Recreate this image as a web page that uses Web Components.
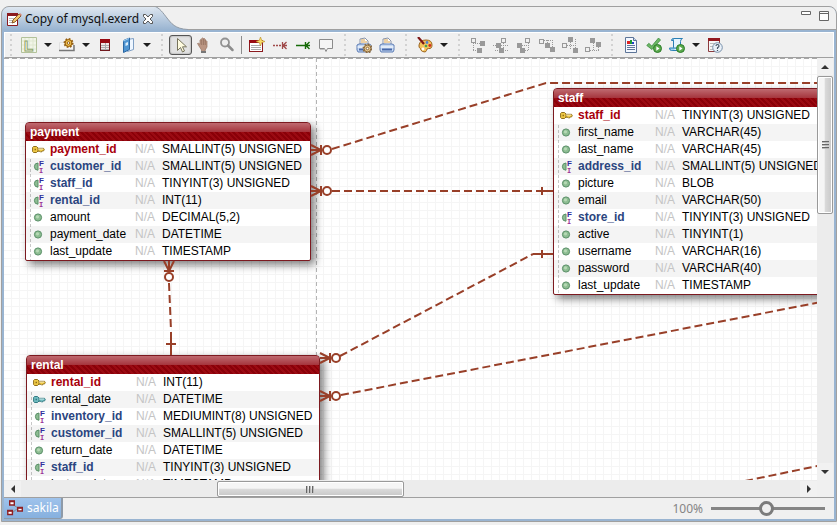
<!DOCTYPE html>
<html lang="en">
<head>
<meta charset="utf-8">
<title>Copy of mysql.exerd</title>
<style>
html, body { height: 100%; }
body { margin: 0; background: #f0f0f0; font: 12px/16px "Noto Sans", "Open Sans", sans-serif; color: #111; overflow: hidden; }
</style>
</head>
<body>
<exerd-editor></exerd-editor>
<script>
const svg = (w, h, body) => `<svg width="${w}" height="${h}" viewBox="0 0 ${w} ${h}" aria-hidden="true">${body}</svg>`;
const boxes = (outline, solid, dots) => svg(16, 16,
  `<g fill="none" stroke="#999" shape-rendering="crispEdges"><path d="M${outline[0]}.5 ${outline[1]}.5h4v4h-4z"/><path stroke-dasharray="1 1" d="${dots}"/></g>` +
  `<g fill="#999" shape-rendering="crispEdges">${solid.map(([x, y]) => `<rect x="${x}" y="${y}" width="5" height="5"/>`).join('')}</g>`);
const printer = `<path d="M4 7V2l5-1 3 3v4z" fill="#fff" stroke="#8a94a8"/><path d="M5 3h4M5 5h6" stroke="#d9a24c"/><path d="M1 8l2-1h10l2 1v5l-1 2H2l-1-2z" fill="#c5d8f2" stroke="#5d7db5"/><path d="M1.5 10h13" stroke="#fff"/><path d="M3 12.5h10" stroke="#4968a8" stroke-width="2"/>`;
const gear = (x, y, c, s) => `<g transform="translate(${x} ${y})"><circle r="4" fill="${c}" stroke="${s}" stroke-width="2" stroke-dasharray="1.6 1.5"/><circle r="3.4" fill="${c}" stroke="${s}"/><circle r="1.3" fill="#fff" stroke="${s}"/></g>`;
const run = `<circle cx="11.5" cy="11.5" r="4" fill="#5aa94c" stroke="#2d7d2a"/><path d="M10.3 9.2v4.6l3.2-2.3z" fill="#fff"/>`;
const ICONS = {
  file: svg(16, 16, `<path d="M1.5 2.5h10v12h-10z" fill="#fff" stroke="#8b1a1e"/><path d="M1 2h11v3H1z" fill="#8b1a1e"/><path d="M3 7.5h7M3 9.5h6M3 11.5h5" stroke="#bbb"/><path d="M6 12l1-3 6-6 2 2-6 6z" fill="#f2c46c" stroke="#8a5a2a"/><path d="M13 3l1-1 2 2-1 1z" fill="#d58a78"/>`),
  close: svg(12, 12, `<path d="M1.5 1.5h2.2L6 4l2.3-2.5h2.2v2L8 6l2.5 2.5v2H8.300L6 8l-2.300 2.500H1.500v-2L4 6 1.500 3.500z" fill="#fff" stroke="#555"/>`),
  layout: svg(16, 16, `<path d="M.5.5h15v15H.5z" fill="#f1f5e8" stroke="#b3c29a"/><path d="M4 1v14M8 1v14M12 1v14M1 4h14M1 8h14M1 12h14" stroke="#dfe7d0"/><text x="3" y="14" font-family="Liberation Sans" font-weight="bold" font-size="15" fill="#fbfcf6" stroke="#8fa56a" stroke-width="1">L</text>`),
  folder: svg(16, 16, `<path d="M.5 5.500h14v8H.5z" fill="#f4f4f4" stroke="#e0e0e0"/><path d="M0 13.500h15V8" fill="none" stroke="#777" stroke-width="1.500"/>` + gear(9.500, 6, '#f4c34b', '#8f5a12')),
  table: svg(16, 16, `<g shape-rendering="crispEdges"><path d="M3.500 2.500h9v11h-9z" fill="#f1e6e6" stroke="#70181c"/><path d="M3 2h10v4H3z" fill="#980a12"/><path d="M4 8.500h8M4 10.500h8M4 12.500h8M8.500 6v7" stroke="#aaa"/></g>`),
  book: svg(16, 16, `<path d="M7.500 2.500l6-1v11l-6 2z" fill="#eef6ff" stroke="#7f9fc4"/><path d="M3.500 3.500l6-2.500v11.500l-6 3z" fill="#4f95d2" stroke="#2b66a2"/><path d="M5.500 6l2.500-1v3l-2.500 1z" fill="#d8ecfb"/><path d="M3 4l6-2.500" stroke="#a5d2f4"/>`),
  select: svg(16, 16, `<path d="M4.500 1.500v12l3-3 2 4.500 2-1-2-4.200h4z" fill="#fffce0" stroke="#77745c"/>`),
  hand: svg(16, 16, `<path d="M3 9L1.500 6.500q1-.8 2.500.8V3q1-1.200 1.700 0V1.500q1-1.200 1.800 0V2q1.200-1 1.800.300V4q1.200-.8 1.700.400V10l-1.800 3v2.500H5.500V13z" fill="#bb9683" stroke="#967360" stroke-width=".7"/><path d="M5.700 3v5M7.600 2v6M9.300 3v5" stroke="#8e6c59" stroke-width=".7"/><path d="M5 14h5v2H5z" fill="#777"/>`),
  zoom: svg(16, 16, `<circle cx="6" cy="5.500" r="4" fill="#eee" stroke="#929292" stroke-width="1.800"/><path d="M9 8.500l4.500 4.500" stroke="#8c8c8c" stroke-width="2.500" stroke-linecap="round"/>`),
  newtable: svg(16, 16, `<g shape-rendering="crispEdges"><path d="M.5 3.500h13v11H.5z" fill="#fff" stroke="#8b1a1e"/><path d="M0 3h14v3H0z" fill="#980a12"/><path d="M2 8.500h10M2 10.500h10M2 12.500h10" stroke="#aaa"/></g><path d="M11.500 0l1.200 3.200L16 4.500l-3.300 1.200L11.500 9l-1.200-3.300L7 4.500l3.300-1.300z" fill="#f9dc6a" stroke="#b98d26" stroke-width=".6"/>`),
  reddash: svg(16, 16, `<path d="M1 8.500h9" stroke="#a04a4a" stroke-width="1.300" stroke-dasharray="2 1"/><path d="M14.500 5L11 8.500l3.500 3.500M10.500 5v7M10 8.500h5" fill="none" stroke="#a04a4a" stroke-width="1.300"/>`),
  greenline: svg(16, 16, `<path d="M1 8.500h14M14.500 5L11 8.500l3.500 3.500M10.500 5v7" fill="none" stroke="#176b09" stroke-width="1.400"/>`),
  note: svg(16, 16, `<path d="M1.500 2.500h13v9h-5l-1.500 3-1.500-3h-5z" fill="#f4f4f4" stroke="#8b8b8b"/><path d="M2 12.500h5" stroke="#c0c0c0"/>`),
  printset: svg(16, 16, printer + `<g transform="translate(3 2)">` + gear(8.500, 9.500, '#e5c68c', '#8c6a3e') + `</g>`),
  print: svg(16, 16, printer),
  palette: svg(16, 16, `<path d="M2 8q1-5 7-5 6 0 6 5 0 4-3.500 3.500-2 0-2 2Q9 16 5.500 14.500q-2-1-2-3-2-.500-1.500-3.500z" fill="#f5c35c" stroke="#9a6420"/><circle cx="10" cy="5.500" r="1.400" fill="#4f83d4"/><circle cx="12.800" cy="8.500" r="1.400" fill="#d02b20"/><circle cx="6" cy="12" r="1.400" fill="#fff"/><circle cx="9" cy="9" r="1.300" fill="#48a452"/><path d="M1 0l6 7" stroke="#7d1515" stroke-width="2.200"/>`),
  al: boxes([1, 1], [[10, 4], [7, 11]], 'M3.500 6v8M3 6.500h7M3 13.500h4'),
  ac: boxes([8, 1], [[3, 6], [6, 11]], 'M10.500 6v6M0 8.500h16M1.500 13.500h14'),
  ar: boxes([9, 1], [[1, 6], [4, 11]], 'M12.500 6v8M6 8.500h7M9 13.500h4'),
  at: boxes([0, 2], [[6, 6], [11, 10]], 'M5 3.500h10M8.500 3v4M13.500 3v7'),
  am: boxes([0, 6], [[6, 0], [11, 11]], 'M5 8.500h10M8.500 5v8M13.500 2v10'),
  ab: boxes([0, 10], [[5, 1], [11, 5]], 'M5 13.500h10M8.500 6v8M13.500 10v4'),
  report: svg(16, 16, `<path d="M2.500.5h8l3 3v12h-11z" fill="#f4f8ff" stroke="#5d7598"/><path d="M10.500.5v3h3" fill="#cbd9ec" stroke="#5d7598"/><path d="M4 4h3v3H4z" fill="#d22"/><path d="M7 3h2v4H7z" fill="#1b9c35"/><path d="M9 5h2v2H9z" fill="#2140c8"/><path d="M4 8.500h8M4 10.500h8M4 12.500h8" stroke="#5d7598"/>`),
  check: svg(16, 16, `<path d="M.8 8.500l2-2.200 3 2.800L12.500 1l2 2L6 12.500z" fill="#6db765" stroke="#3b8b3e" stroke-width=".8"/>` + run),
  script: svg(16, 16, `<path d="M4.500 1.500h9q-2 .5-2 3v9h-9q2-.5 2-3z" fill="#e6f4fd" stroke="#2a7fb4"/><path d="M4.500 1.500q-2 0-2 2h2M2.500 13.500q-2 0-2-2.500h9" fill="#9bd0f0" stroke="#2a7fb4"/>` + run),
  help: svg(16, 16, `<path d="M1.500 1.500h11v13h-11z" fill="#f7f7f7" stroke="#8b3b3e"/><path d="M1 1h12v3H1z" fill="#93191f"/><path d="M3 6.500h6M3 9.500h3M3 12.500h3" stroke="#bbb"/><circle cx="10.500" cy="10.500" r="4.800" fill="#eaf1f8" stroke="#7890ab"/><path d="M9 9q0-1.500 1.500-1.500T12 9q0 .8-1.500 1.800V12M10.500 13v1" fill="none" stroke="#456" stroke-width="1.200"/>`),
  down: svg(8, 4, `<path d="M0 0h8L4 4z" fill="#1e1e1e"/>`),
  min: svg(10, 10, `<path d="M.5.5h9v3h-9z" fill="#fff" stroke="#666"/>`),
  max: svg(10, 10, `<path d="M.5.5h9v9h-9z" fill="#fff" stroke="#666"/><path d="M0 2.500h10" stroke="#666"/>`),
  model: svg(16, 16, `<path d="M5 4l6 4-6 5" fill="none" stroke="#888"/><g fill="#fff" stroke="#8e2024" stroke-width="1.400"><path d="M2.700 1h4.600v4H2.700zM.8 10.500h4.600v4H.8zM10.700 7.500h4.600v3.500h-4.600z"/></g><path d="M2 1.500h6M0 11h6M10 8h6" stroke="#8e2024" stroke-width="1.500"/>`)
};
const key = (c, d) => svg(13, 17, `<path d="M5 7.300h6.500l.8 1.200-.8 1.500H10l-1 1.300-1-1H5z" fill="${c}" stroke="${d}" stroke-width=".9"/><path d="M1.500 5.500h3L6 7v3l-1.500 1.500h-3L.6 10.500v-4z" fill="${c}" stroke="${d}"/><path d="M2.500 8.500h1.500" stroke="${d}" stroke-width="1.500"/><path d="M6 8h5" stroke="#fff" stroke-opacity=".7"/>`);
const KIND = {
  pk: key('#efc945', '#8f6f1c'),
  uk: key('#70bcc0', '#347a82'),
  col: svg(13, 17, `<circle cx="6" cy="8.500" r="3.600" fill="#8dbd92" stroke="#5a8f68"/><circle cx="5.500" cy="7.800" r="1.600" fill="#b6d9b5"/>`),
  fk: svg(13, 17, `<path d="M6 5A3.600 3.600 0 0 0 6 12.200z" fill="#8dbd92" stroke="#5a8f68"/><g font-weight="bold"><text x="7" y="8" font-family="Liberation Sans" font-size="8" fill="#2f2f9c">F</text><text x="7" y="15" font-family="Liberation Mono" font-size="7" fill="#9a3296">I</text></g>`)
};

const define = (name, html, setup) => {
  const t = document.createElement('template');
  t.innerHTML = html;
  customElements.define(name, class extends HTMLElement {
    connectedCallback() {
      if (this.shadowRoot) return;
      this.attachShadow({ mode: 'open' }).append(t.content.cloneNode(true));
      if (setup) setup(this, this.shadowRoot);
    }
  });
};

/* Icon button, optionally followed by a drop-down arrow */
define('tool-button', `<style>
:host { display: flex; height: 22px; }
button { box-sizing: border-box; width: 23px; height: 20px; margin: 1px 0; padding: 0; border: 1px solid transparent; border-radius: 3px; background: none; display: grid; place-items: center; }
svg { display: block; }
.more { width: 15px; }
:host([pressed]) .main { border-color: #555; background: #e2e2e2; box-shadow: inset 0 0 2px #888; }
</style><button class="main"></button>`, (el, root) => {
  const b = root.querySelector('button');
  b.innerHTML = ICONS[el.getAttribute('icon')];
  b.setAttribute('aria-label', el.getAttribute('label'));
  if (el.hasAttribute('pressed')) b.setAttribute('aria-pressed', 'true');
  if (el.hasAttribute('menu')) {
    const m = document.createElement('button');
    m.className = 'more';
    m.setAttribute('aria-label', el.getAttribute('label') + ' options');
    m.innerHTML = ICONS.down;
    root.append(m);
  }
});

define('tool-grip', `<style>
:host { display: block; width: 15px; height: 22px; background: radial-gradient(circle, #b4b4b4 1px, transparent 1px) center / 4px 5px; background-repeat: no-repeat repeat; background-size: 4px 5px; }
:host([line]) { width: 1px; height: 18px; margin: 0 3px; background: #8c8c8c; }
</style>`);

define('scroll-bar', `<style>
:host { display: flex; background: #ececec; padding-top: 1px; }
:host([vertical]) { flex-direction: column; padding: 0 1px 0 0; }
button { flex: none; width: 17px; height: 16px; padding: 0; border: 0; background: #f1f1f1; display: grid; place-items: center; }
:host([vertical]) button { width: 16px; height: 17px; }
.thumb { display: grid; place-items: center; box-sizing: border-box; border: 1px solid #999; border-radius: 2px; box-shadow: inset 0 0 0 1px #fff; background: linear-gradient(#f5f5f5 45%, #dadada 50%, #c8c8c8); }
:host([vertical]) .thumb { background: linear-gradient(90deg, #f5f5f5 45%, #dadada 50%, #c8c8c8); }
.grip { width: 8px; height: 7px; background: repeating-linear-gradient(90deg, #666 0 1px, #bbb 1px 2px, transparent 2px 3px); }
:host([vertical]) .grip { width: 7px; height: 8px; background: repeating-linear-gradient(#666 0 1px, #bbb 1px 2px, transparent 2px 3px); }
svg { display: block; }
.next svg { transform: rotate(180deg); }
</style><button class="prev"></button><div class="before"></div><div class="thumb"><div class="grip"></div></div><div class="after"></div><button class="next"></button>`, (el, root) => {
  const v = el.hasAttribute('vertical');
  const arrow = v ? svg(8, 4, '<path d="M0 4h8L4 0z" fill="#333"/>') : svg(4, 8, '<path d="M4 0v8L0 4z" fill="#333"/>');
  const [prev, next] = root.querySelectorAll('button');
  prev.innerHTML = next.innerHTML = arrow;
  prev.setAttribute('aria-label', v ? 'Scroll up' : 'Scroll left');
  next.setAttribute('aria-label', v ? 'Scroll down' : 'Scroll right');
  const parts = el.getAttribute('parts').split(' ');
  ['before', 'thumb', 'after'].forEach((c, i) => root.querySelector('.' + c).style.flex = parts[i] + ' 1 0');
});

/* One database table drawn as a node of the diagram */
define('erd-entity', `<style>
:host { display: block; position: absolute; box-sizing: border-box; border: 1px solid #7c1a20; border-radius: 4px 4px 2px 2px; overflow: hidden; background: #fff; box-shadow: 4px 4px 8px rgba(0, 0, 0, .5); font: 12px/17px "Liberation Sans", Arial, sans-serif; color: #000; white-space: nowrap; }
table { width: 100%; border-collapse: collapse; table-layout: fixed; background: repeating-linear-gradient(#c8c8c8 0 3px, transparent 3px 5px) 4px 18px / 1px 100% no-repeat; }
caption { height: 18px; padding-left: 4px; text-align: left; font-weight: bold; line-height: 18px; color: #fff; background: linear-gradient(#bf6a70, #a5343c) 0 0 / 100% 9px no-repeat, repeating-linear-gradient(45deg, #8a0008 0 2px, #9b0a12 2px 4px); }
tr:nth-child(even) { background: rgba(0, 0, 0, .045); }
td { padding: 0; height: 17px; }
.icon { width: 24px; }
.null { width: 27px; color: #c4c4c4; }
td svg { display: block; margin-left: 6px; }
.pk .name, .fk .name { font-weight: bold; }
.pk .name { color: #a8000c; }
.fk .name { color: #2b4580; }
</style><table><caption></caption><colgroup><col class="icon"><col class="names"><col class="null"><col></colgroup><tbody></tbody></table>`, (el, root) => {
  const e = ENTITIES[el.getAttribute('name')];
  el.style.left = e.x + 'px';
  el.style.top = e.y + 'px';
  el.style.width = e.width + 'px';
  root.querySelector('caption').textContent = el.getAttribute('name');
  root.querySelector('.names').style.width = e.names + 'px';
  root.querySelector('tbody').innerHTML = e.columns.map(([k, n, t]) =>
    `<tr class="${k}"><td>${KIND[k]}</td><td class="name">${n}</td><td class="null">N/A</td><td>${t}</td></tr>`).join('');
});

const ENTITIES = {
  payment: { x: 21, y: 64, width: 286, names: 85, columns: [
    ['pk', 'payment_id', 'SMALLINT(5) UNSIGNED'], ['fk', 'customer_id', 'SMALLINT(5) UNSIGNED'],
    ['fk', 'staff_id', 'TINYINT(3) UNSIGNED'], ['fk', 'rental_id', 'INT(11)'], ['col', 'amount', 'DECIMAL(5,2)'],
    ['col', 'payment_date', 'DATETIME'], ['col', 'last_update', 'TIMESTAMP']] },
  rental: { x: 22, y: 297, width: 294, names: 85, columns: [
    ['pk', 'rental_id', 'INT(11)'], ['uk', 'rental_date', 'DATETIME'], ['fk', 'inventory_id', 'MEDIUMINT(8) UNSIGNED'],
    ['fk', 'customer_id', 'SMALLINT(5) UNSIGNED'], ['col', 'return_date', 'DATETIME'],
    ['fk', 'staff_id', 'TINYINT(3) UNSIGNED'], ['col', 'last_update', 'TIMESTAMP']] },
  staff: { x: 549, y: 30, width: 280, names: 77, columns: [
    ['pk', 'staff_id', 'TINYINT(3) UNSIGNED'], ['col', 'first_name', 'VARCHAR(45)'], ['col', 'last_name', 'VARCHAR(45)'],
    ['fk', 'address_id', 'SMALLINT(5) UNSIGNED'], ['col', 'picture', 'BLOB'], ['col', 'email', 'VARCHAR(50)'],
    ['fk', 'store_id', 'TINYINT(3) UNSIGNED'], ['col', 'active', 'TINYINT(1)'], ['col', 'username', 'VARCHAR(16)'],
    ['col', 'password', 'VARCHAR(40)'], ['col', 'last_update', 'TIMESTAMP']] }
};

define('erd-canvas', `<style>
:host { display: block; position: relative; overflow: hidden; min-width: 0; min-height: 0;
  background: repeating-linear-gradient(90deg, #a8a8a8 0 5px, transparent 5px 8px) 0 0 / 100% 1px no-repeat,
  repeating-linear-gradient(#b4b4b4 0 4px, transparent 4px 7px) 312px 0 / 1px 100% no-repeat,
  linear-gradient(#f5f5f5 1px, transparent 1px) 0 0 / 8px 8px, linear-gradient(90deg, #f5f5f5 1px, #fff 1px) 7px 0 / 8px 8px; }
svg { position: absolute; inset: 0; width: 100%; height: 100%; overflow: hidden; }
</style><slot></slot>
<svg aria-hidden="true" fill="none" stroke="#983f28" stroke-width="2">
<defs><g id="foot"><path d="M0-5L10 0 0 5M0 0h10M10-5v10"/><circle cx="16" cy="0" r="4" fill="#fff"/></g></defs>
<use href="#foot" x="307" y="92"/><use href="#foot" x="307" y="133"/><use href="#foot" x="316" y="300"/><use href="#foot" x="316" y="338"/>
<use href="#foot" transform="translate(165 203) rotate(90)"/>
<g stroke-dasharray="8 4"><path d="M328 91L542 25H900"/><path d="M328 133H538"/><path d="M336 298L529 196"/><path d="M337 337L900 228"/><path d="M741 423L900 390"/><path d="M165 225L167 272"/></g>
<path d="M538 133h11M538 129v8M529 196h20M538 192v8M167 274v23M162 286h10"/>
</svg>`);

define('zoom-slider', `<style>
:host { display: flex; align-items: center; gap: 8px; color: #858585; }
input { appearance: none; width: 114px; height: 16px; margin: 0; background: linear-gradient(#858585, #858585) center / 100% 3px no-repeat; }
input::-webkit-slider-thumb { appearance: none; box-sizing: border-box; width: 15px; height: 15px; border: 3px solid #7c7c7c; border-radius: 50%; background: #f0f0f0; }
</style><label for="zoom">100%</label><input id="zoom" type="range" min="0" max="100" value="48">`);

define('editor-tab', `<style>
:host { display: flex; height: 23px; }
.tab { display: flex; align-items: center; gap: 3px; padding-left: 4px; border-radius: 7px 0 0; background: linear-gradient(#dfe7f0, #99b4d1); }
svg { display: block; }
button { border: 0; padding: 0; margin: 0; background: none; }
.rest { flex: 1; display: flex; justify-content: flex-end; gap: 8px; padding: 4px 7px 0; border-bottom: 1px solid #a0a0a0; border-radius: 0 7px 0 0; background: #f0f0f0; }
.rest button { height: 10px; }
.curve { background: #f0f0f0; }
</style><div class="tab"><span class="icon"></span><slot></slot><button class="x" aria-label="Close tab"></button></div>
<svg class="curve" width="34" height="23" viewBox="0 0 34 23" aria-hidden="true"><defs><linearGradient id="g" x2="0" y2="1"><stop stop-color="#dfe7f0"/><stop offset="1" stop-color="#99b4d1"/></linearGradient></defs><path d="M0-1C6 1 9 6 13 11S21 22 34 22.500V23H0z" fill="url(#g)"/><path d="M0-1C6 1 9 6 13 11S21 22 34 22.500" fill="none" stroke="#909aa5"/></svg>
<div class="rest"><button class="min" aria-label="Minimize"></button><button class="max" aria-label="Maximize"></button></div>`, (el, root) => {
  root.querySelector('.icon').innerHTML = ICONS.file;
  root.querySelector('.x').innerHTML = ICONS.close;
  root.querySelector('.min').innerHTML = ICONS.min;
  root.querySelector('.max').innerHTML = ICONS.max;
});

define('sheet-tab', `<style>
:host { display: flex; }
button { display: flex; align-items: center; gap: 4px; height: 21px; padding: 0 2px 0 3px; border: 0; border-right: 2px solid #8e9aa8; border-bottom: 1px solid #8e9aa8; border-radius: 0 0 3px; background: linear-gradient(#9fc3ec, #86b0de); color: #fff; font: inherit; }
</style><button><span class="icon"></span><slot></slot></button>`, (el, root) => {
  const i = root.querySelector('.icon');
  i.innerHTML = ICONS.model;
  i.firstChild.style.display = 'block';
});

define('exerd-editor', `<style>
:host { display: flex; flex-direction: column; box-sizing: border-box; height: 100vh; padding: 6px 0 3px 1px; }
.frame { flex: 1; min-height: 0; display: flex; flex-direction: column; border: 1px solid #a0a0a0; border-radius: 8px 8px 0 0; background: #99b4d1; }
.inner { flex: 1; min-height: 0; display: flex; flex-direction: column; margin: 2px; background: #f0f0f0; }
.bar { display: flex; align-items: center; height: 24px; border: 1px solid #fff; border-bottom-color: #a0a0a0; }
.bar tool-grip:first-child { width: 12px; }
.work { flex: 1; min-height: 0; display: grid; grid-template: 1fr 17px / 1fr 17px; }
.foot { display: flex; justify-content: space-between; height: 21px; border-top: 1px solid #a0a0a0; }
zoom-slider { padding-right: 9px; }
</style>
<div class="frame">
<editor-tab>Copy of mysql.exerd</editor-tab>
<div class="inner">
<div class="bar" role="toolbar" aria-label="Diagram tools">
<tool-grip></tool-grip>
<tool-button icon="layout" label="Layout" menu></tool-button><tool-button icon="folder" label="Display settings" menu></tool-button><tool-button icon="table" label="Table view"></tool-button><tool-button icon="book" label="Notation" menu></tool-button>
<tool-grip></tool-grip>
<tool-button icon="select" label="Select" pressed></tool-button><tool-button icon="hand" label="Pan"></tool-button><tool-button icon="zoom" label="Zoom"></tool-button>
<tool-grip line></tool-grip>
<tool-button icon="newtable" label="New table"></tool-button><tool-button icon="reddash" label="Non-identifying relation"></tool-button><tool-button icon="greenline" label="Identifying relation"></tool-button><tool-button icon="note" label="Note"></tool-button>
<tool-grip></tool-grip>
<tool-button icon="printset" label="Page setup"></tool-button><tool-button icon="print" label="Print"></tool-button>
<tool-grip></tool-grip>
<tool-button icon="palette" label="Theme" menu></tool-button>
<tool-grip></tool-grip>
<tool-button icon="al" label="Align left"></tool-button><tool-button icon="ac" label="Align center"></tool-button><tool-button icon="ar" label="Align right"></tool-button><tool-button icon="at" label="Align top"></tool-button><tool-button icon="am" label="Align middle"></tool-button><tool-button icon="ab" label="Align bottom"></tool-button>
<tool-grip></tool-grip>
<tool-button icon="report" label="Report"></tool-button><tool-button icon="check" label="Validate"></tool-button><tool-button icon="script" label="Generate script" menu></tool-button><tool-button icon="help" label="Help"></tool-button>
</div>
<div class="work">
<erd-canvas><erd-entity name="payment"></erd-entity><erd-entity name="rental"></erd-entity><erd-entity name="staff"></erd-entity></erd-canvas>
<scroll-bar vertical parts="1 137 250"></scroll-bar>
<scroll-bar parts="196 186 397"></scroll-bar>
</div>
<div class="foot"><sheet-tab>sakila</sheet-tab><zoom-slider></zoom-slider></div>
</div>
</div>`);
</script>
</body>
</html>
